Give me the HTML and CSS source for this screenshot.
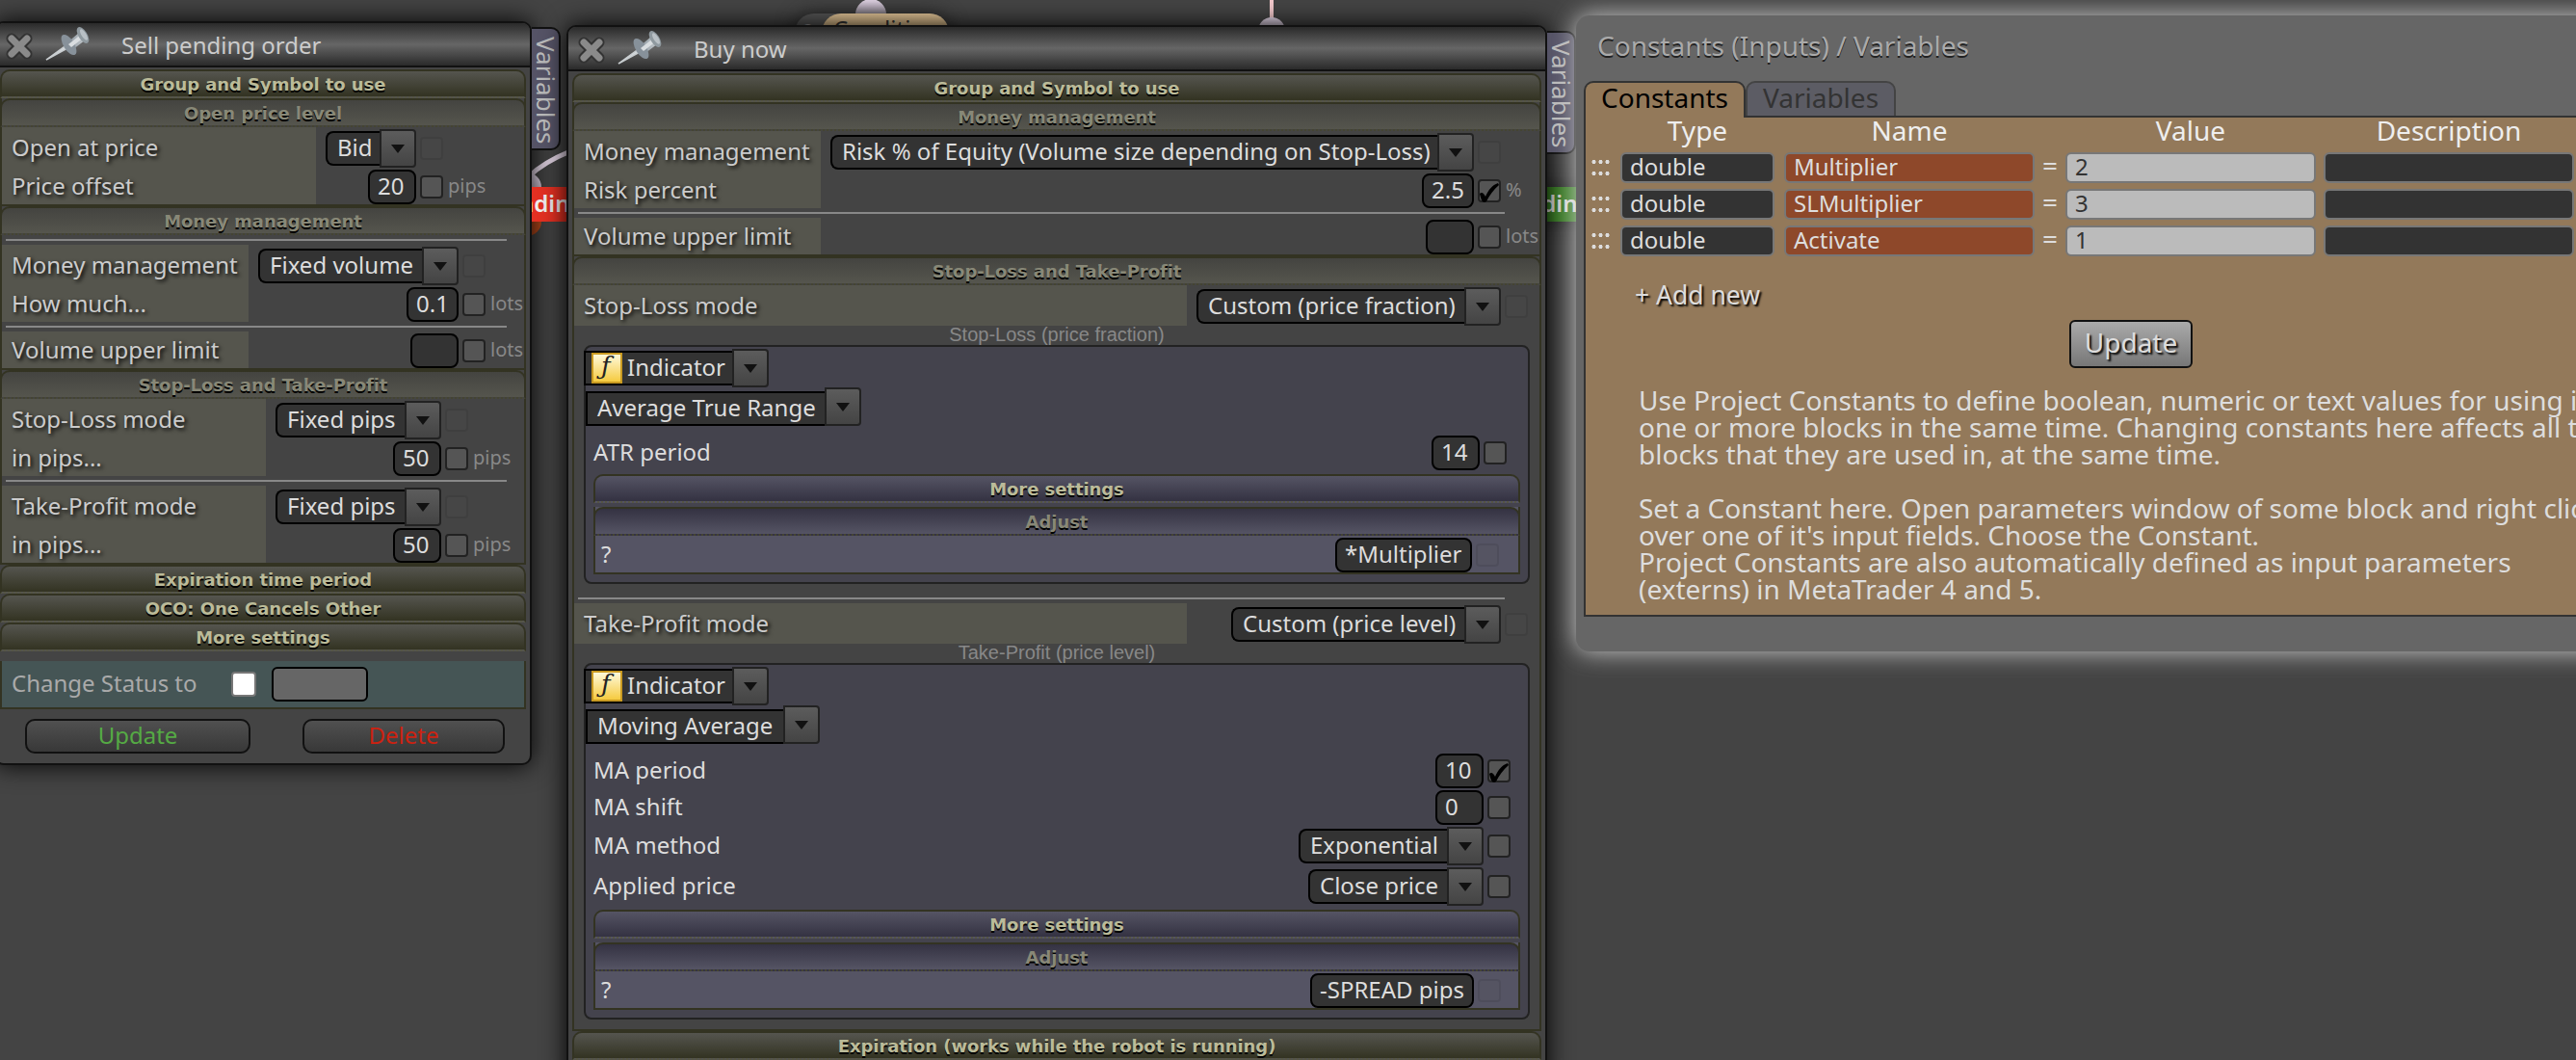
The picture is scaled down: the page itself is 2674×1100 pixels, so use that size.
FILE: index.html
```
<!DOCTYPE html>
<html>
	<head>
		<meta charset="utf-8">
		<title>Project</title>
		<link rel="stylesheet" href="styles.css">
	</head>
	<body>
	<svg width="0" height="0" class="defs">
		<defs>
			<linearGradient id="gp" x1="0" y1="0" x2="1" y2="0"><stop offset="0" stop-color="#89939b"/><stop offset="1" stop-color="#c3c9cd"/></linearGradient>
			<linearGradient id="gf" x1="0" y1="0" x2="0" y2="1"><stop offset="0" stop-color="#fffbe0"/><stop offset="1" stop-color="#f5c93a"/></linearGradient>
			<linearGradient id="gl" x1="0" y1="0" x2="0" y2="1"><stop offset="0" stop-color="#eee0f2"/><stop offset="1" stop-color="#a79cab"/></linearGradient>
			<symbol id="i-close" viewBox="0 0 30 30">
				<path d="M7 7L23 23M23 7L7 23" stroke="#333" stroke-width="11" stroke-linecap="round"/>
				<path d="M7 7L23 23M23 7L7 23" stroke="#8a8a8a" stroke-width="7" stroke-linecap="round"/>
			</symbol>
			<symbol id="i-pin" viewBox="0 0 48 36">
				<path d="M2 34L24 18L26 21Z" fill="#d5d9dc" stroke="#c8cdd0" stroke-width="1.5"/>
				<path d="M23 17L36 6L42 14L30 23Z" fill="url(#gp)"/>
				<ellipse cx="25.500" cy="18.500" rx="5.500" ry="12" transform="rotate(-32 25.500 18.500)" fill="#87919a"/>
				<path d="M25 18L39 7L41 11L28 21Z" fill="#d9dde0"/>
				<ellipse cx="40" cy="8.500" rx="4.500" ry="9.500" transform="rotate(-32 40 8.500)" fill="#8f999f"/>
				<ellipse cx="41" cy="8" rx="2.500" ry="6.500" transform="rotate(-32 41 8)" fill="#b9c0c5"/>
			</symbol>
			<symbol id="i-check" viewBox="0 0 24 26">
				<path d="M2 15C4 13 6 14 8 18C11 11 15 6 21 4L22 6C16 11 12 17 9 23C6 25 4 24 2 15Z" fill="#000"/>
			</symbol>
		</defs>
	</svg>

	<!-- diagram behind the windows -->
	<svg class="canvas" width="2674" height="1100">
		<path d="M549 183Q565 168 592 157" fill="none" stroke="#e6d8e8" stroke-width="5"/>
		<circle cx="547" cy="194" r="15" fill="url(#gl)"/>
		<circle cx="547" cy="230" r="15" fill="#b5481c"/>
		<circle cx="904" cy="15" r="16" fill="url(#gl)"/>
		<path d="M1320 0V20" stroke="#f3c9cc" stroke-width="4"/>
		<circle cx="1320" cy="32" r="14" fill="url(#gl)"/>
	</svg>
	<div class="node node-cond"><span class="num">2</span><span class="pill">Condition</span></div>
	<div class="node node-green">nding</div>

	<div class="win win-sell">
		<div class="titlebar"><svg class="x"><use href="#i-close"/></svg><svg class="pin"><use href="#i-pin"/></svg><span>Sell pending order</span></div>
		<div class="sidetab">Variables</div>
		<div class="node-red">nding</div>
		<div class="group closed"><h3>Group and Symbol to use</h3></div>
		<div class="group g-open">
			<h3>Open price level</h3>
			<div class="row tall"><label>Open at price</label><div class="field"><span class="sel w56">Bid</span><i class="dd"></i><b class="cb off"></b><em></em></div></div>
			<div class="row"><label>Price offset</label><div class="field"><span class="inp w50">20</span><b class="cb"></b><em>pips</em></div></div>
		</div>
		<div class="group g-money">
			<h3>Money management</h3>
			<hr>
			<div class="row tall"><label>Money management</label><div class="field"><span class="sel w170">Fixed volume</span><i class="dd"></i><b class="cb off"></b><em></em></div></div>
			<div class="row"><label>How much...</label><div class="field"><span class="inp w54">0.1</span><b class="cb"></b><em>lots</em></div></div>
			<hr>
			<div class="row"><label>Volume upper limit</label><div class="field"><span class="inp w50"></span><b class="cb"></b><em>lots</em></div></div>
		</div>
		<div class="group g-stops">
			<h3>Stop-Loss and Take-Profit</h3>
			<div class="row tall"><label>Stop-Loss mode</label><div class="field"><span class="sel w134">Fixed pips</span><i class="dd"></i><b class="cb off"></b><em></em></div></div>
			<div class="row"><label>in pips...</label><div class="field"><span class="inp w50">50</span><b class="cb"></b><em>pips</em></div></div>
			<hr>
			<div class="row tall"><label>Take-Profit mode</label><div class="field"><span class="sel w134">Fixed pips</span><i class="dd"></i><b class="cb off"></b><em></em></div></div>
			<div class="row"><label>in pips...</label><div class="field"><span class="inp w50">50</span><b class="cb"></b><em>pips</em></div></div>
		</div>
		<div class="group closed"><h3>Expiration time period</h3></div>
		<div class="group closed"><h3>OCO: One Cancels Other</h3></div>
		<div class="group closed"><h3>More settings</h3></div>
		<div class="status"><span>Change Status to</span><b></b><i></i></div>
		<div class="buttons"><div class="btn update">Update</div><div class="btn delete">Delete</div></div>
	</div>

	<div class="win win-buy">
		<div class="titlebar"><svg class="x"><use href="#i-close"/></svg><svg class="pin"><use href="#i-pin"/></svg><span>Buy now</span></div>
		<div class="sidetab">Variables</div>
		<div class="group closed"><h3>Group and Symbol to use</h3></div>
		<div class="group g-money">
			<h3>Money management</h3>
			<div class="row tall"><label>Money management</label><div class="field"><span class="sel w630">Risk % of Equity (Volume size depending on Stop-Loss)</span><i class="dd"></i><b class="cb off"></b><em></em></div></div>
			<div class="row"><label>Risk percent</label><div class="field"><span class="inp w54">2.5</span><b class="cb"><svg><use href="#i-check"/></svg></b><em>%</em></div></div>
			<hr>
			<div class="row"><label>Volume upper limit</label><div class="field"><span class="inp w50"></span><b class="cb"></b><em>lots</em></div></div>
		</div>
		<div class="group g-levels">
			<h3>Stop-Loss and Take-Profit</h3>
			<div class="row tall"><label>Stop-Loss mode</label><div class="field"><span class="sel w278">Custom (price fraction)</span><i class="dd"></i><b class="cb off"></b><em></em></div></div>
			<div class="subtitle">Stop-Loss (price fraction)</div>
			<div class="box box-atr">
				<div class="kind"><span class="sel"><svg class="f" viewBox="0 0 32 32"><rect x="1" y="1" width="30" height="30" fill="url(#gf)" stroke="#c99a22" stroke-width="2"/><text x="10" y="23" class="ftext">ƒ</text></svg>Indicator</span><i class="dd"></i></div>
				<div class="kind name"><span class="sel w249">Average True Range</span><i class="dd"></i></div>
				<div class="params">
					<div class="row"><label>ATR period</label><div class="field"><span class="inp w50">14</span><b class="cb"></b><em></em></div></div>
				</div>
				<div class="group blue closed"><h3>More settings</h3></div>
				<div class="group blue adjust">
					<h3>Adjust</h3>
					<div class="row"><label>?</label><div class="field"><span class="inp w142">*Multiplier</span><b class="cb off"></b><em></em></div></div>
				</div>
			</div>
			<hr class="sep">
			<div class="row tall"><label>Take-Profit mode</label><div class="field"><span class="sel w242">Custom (price level)</span><i class="dd"></i><b class="cb off"></b><em></em></div></div>
			<div class="subtitle">Take-Profit (price level)</div>
			<div class="box box-ma">
				<div class="kind"><span class="sel"><svg class="f" viewBox="0 0 32 32"><rect x="1" y="1" width="30" height="30" fill="url(#gf)" stroke="#c99a22" stroke-width="2"/><text x="10" y="23" class="ftext">ƒ</text></svg>Indicator</span><i class="dd"></i></div>
				<div class="kind name"><span class="sel w205">Moving Average</span><i class="dd"></i></div>
				<div class="params">
					<div class="row"><label>MA period</label><div class="field"><span class="inp w50">10</span><b class="cb"><svg><use href="#i-check"/></svg></b><em></em></div></div>
					<div class="row"><label>MA shift</label><div class="field"><span class="inp w50">0</span><b class="cb"></b><em></em></div></div>
					<div class="row tall"><label>MA method</label><div class="field"><span class="sel w154">Exponential</span><i class="dd"></i><b class="cb"></b><em></em></div></div>
					<div class="row tall"><label>Applied price</label><div class="field"><span class="sel w144">Close price</span><i class="dd"></i><b class="cb"></b><em></em></div></div>
				</div>
				<div class="group blue closed"><h3>More settings</h3></div>
				<div class="group blue adjust">
					<h3>Adjust</h3>
					<div class="row"><label>?</label><div class="field"><span class="inp w170">-SPREAD pips</span><b class="cb off"></b><em></em></div></div>
				</div>
			</div>
		</div>
		<div class="group closed"><h3>Expiration (works while the robot is running)</h3></div>
	</div>

	<div class="win-const">
		<h2>Constants (Inputs) / Variables</h2>
		<div class="tabs"><div class="tab active">Constants</div><div class="tab">Variables</div></div>
		<div class="panel">
			<div class="line head"><span></span><span>Type</span><span></span><span>Name</span><span></span><span>Value</span><span></span><span>Description</span></div>
			<div class="line"><i class="grip"></i><span class="c">double</span><u></u><span class="c red">Multiplier</span><u>=</u><span class="c val">2</span><u></u><span class="c"></span></div>
			<div class="line"><i class="grip"></i><span class="c">double</span><u></u><span class="c red">SLMultiplier</span><u>=</u><span class="c val">3</span><u></u><span class="c"></span></div>
			<div class="line"><i class="grip"></i><span class="c">double</span><u></u><span class="c red">Activate</span><u>=</u><span class="c val">1</span><u></u><span class="c"></span></div>
			<div class="add">+ Add new</div>
			<div class="save">Update</div>
			<p>Use Project Constants to define boolean, numeric or text values for using in<br>one or more blocks in the same time. Changing constants here affects all the<br>blocks that they are used in, at the same time.<br><br>Set a Constant here. Open parameters window of some block and right click<br>over one of it's input fields. Choose the Constant.<br>Project Constants are also automatically defined as input parameters<br>(externs) in MetaTrader 4 and 5.</p>
		</div>
	</div>
	</body>
</html>
```
FILE: styles.css
```
*{box-sizing:border-box;}
body{margin:0; width:2674px; height:1100px; overflow:hidden; position:relative; background:#444; font-family:"Noto Sans",sans-serif; font-size:24px; line-height:32px; color:#ddd;}
.defs{position:absolute;}
.canvas{position:absolute; left:0; top:0;}

/* diagram nodes */
.node{position:absolute; color:#eee; box-shadow:0 0 20px #222;}
.node-cond{left:825px; top:14px; width:160px; height:40px; border-radius:20px; background:#555; display:flex;}
.node-cond .num{width:28px; text-align:center; color:#999; font-size:20px; padding-top:2px;}
.node-cond .pill{flex:1; border-radius:20px; background:linear-gradient(#e3c698,#c09c66); color:#333; padding:0 0 0 12px;}
.node-red{position:absolute; left:100%; top:170px; width:38px; margin-left:2px; height:36px; line-height:34px; background:#e33022; color:#eee; font-weight:600; text-indent:-13px; overflow:hidden;}
.node-green{left:1570px; top:194px; width:90px; height:36px; line-height:34px; background:#3c8426; padding-left:15px; font-weight:600;}

/* windows */
.win{position:absolute; background:#444; border:2px solid #111; border-radius:10px; padding:0 4px; box-shadow:0 0 26px #000;}
.win-sell{left:-6px; top:22px; width:558px; height:772px;}
.win-buy{left:588px; top:26px; width:1018px; height:1100px;}
.titlebar{height:46px; margin:0 -4px 2px; border-bottom:2px solid #111; border-radius:8px 8px 0 0; background:linear-gradient(#2a2a2a,#666 50%,#2a2a2a); display:flex; align-items:center; color:#ccc;}
.titlebar span{padding-top:2px;}
.titlebar .x{width:30px; height:30px; margin:4px 0 0 9px;}
.titlebar .pin{width:48px; height:36px; margin:0 32px 0 11px;}
.sidetab{position:absolute; left:100%; top:4px; margin-left:2px; width:30px; height:128px; border:2px solid #111; border-left:0; border-radius:0 10px 10px 0; background:#555366; color:#bbb; writing-mode:vertical-rl; line-height:26px; font-size:26px; padding-top:8px;}

/* groups */
.group{border:2px solid #332; border-top:0;}
.group h3{margin:0 -2px; height:30px; border:2px solid #332; border-bottom:2px dotted #443; border-radius:10px 10px 0 0; background:linear-gradient(#444440,#55554d); font:bold 18px/27px "DejaVu Sans",sans-serif; letter-spacing:-.06px; color:#887; text-align:center; text-shadow:0 2px 0 #000;}
.group.closed{border:0;}
.group.closed h3{margin:0; border-bottom:2px dotted #554; background:linear-gradient(#55554f,#332); color:#bb9;}
.row{display:flex; height:38px;}
.row.tall{height:42px;}
.row label{width:256px; background:#55554d; padding:2px 0 0 10px; color:#ccc; text-shadow:2px 2px 4px #000; line-height:34px;}
.row.tall label{line-height:37px;}
.g-open label{width:326px;}
.g-stops label{width:274px;}
.g-levels>.row>label{width:636px;}
.field{flex:1; display:flex; align-items:center; justify-content:flex-end; padding-top:2px;}
.field em{font-style:normal; font-size:20px; line-height:28px; color:#888; width:40px; padding:0 0 2px 5px; white-space:nowrap;}
.g-open em{width:84px;}
.g-stops em{width:58px;}
.g-levels>.row em{width:12px;}
.inp,.sel{display:block; height:36px; line-height:29px; background:#333; border:2px solid #000; border-radius:8px; padding-left:8px; white-space:nowrap;}
.sel{border-right:0; border-radius:8px 0 0 8px; padding-left:10px;}
.dd{width:38px; height:40px; border:2px solid #222; border-radius:0 4px 4px 0; background:linear-gradient(#5c5c5c,#444); display:flex; align-items:center; justify-content:center;}
.dd:after{content:""; border:7px solid transparent; border-top:9px solid #111; border-bottom:0;}
.cb{width:24px; height:24px; margin-left:4px; border:2px solid #222; border-radius:4px; background:#555;}
.cb.off{opacity:.12;}
.cb svg{display:block; width:24px; height:26px; margin:-2px 0 0 -2px;}
.w50{width:50px;} .w54{width:54px;} .w56{width:56px;} .w134{width:134px;} .w142{width:142px;} .w144{width:144px;} .w154{width:154px;}
.w170{width:170px;} .w205{width:205px;} .w242{width:242px;} .w249{width:249px;} .w278{width:278px;} .w630{width:630px;}
hr{height:2px; border:0; margin:4px 18px 4px 4px; background:#888;}
.win-buy hr{margin-right:36px;}

/* status line and buttons */
.status{margin-top:10px; height:50px; border:2px solid #332; border-top:0; background:#455555; color:#aaa; display:flex; align-items:center; padding-left:10px;}
.status span{width:228px; margin-bottom:2px;}
.status b{width:26px; height:26px; background:#fff; border:2px solid #777; border-radius:4px;}
.status i{width:100px; height:36px; margin-left:16px; background:#666; border:2px solid #000; border-radius:6px;}
.buttons{display:flex; justify-content:space-between; padding:10px 22px 0 26px;}
.btn{height:36px; line-height:30px; border:2px solid #111; border-radius:10px; background:linear-gradient(#505050,#383838); text-align:center;}
.update{width:234px; color:#5a4;}
.delete{width:210px; color:#c21;}

/* indicator boxes */
.subtitle{height:20px; font:20px/19px "Liberation Sans",Arial,sans-serif; color:#888; text-align:center;}
.box{margin:0 10px; border:2px solid #222; border-radius:8px; background:#44434d; padding:2px 8px 8px;}
.kind{display:flex; align-items:center; height:40px; margin-left:-10px;}
.kind .sel{width:154px; border-radius:0; display:flex; padding-left:6px;}
.kind .f{width:32px; height:32px; margin-right:5px;}
.ftext{font:italic 26px "DejaVu Serif",serif; fill:#222;}
.kind.name{margin-left:-8px; align-items:flex-end;}
.kind.name .sel{padding-left:10px;}
.kind .w249{width:248px;}
.kind .w205{width:205px;}
.params{padding:8px 0 4px;}
.box .row label{background:none; width:300px; color:#ddd; text-shadow:none; padding-left:0;}
.box-atr .params em{width:14px;}
.box-ma .params em{width:10px;}
.box em{padding-left:0;}
.blue+.blue{margin-top:4px;}
.blue h3{background:linear-gradient(#343242,#555464);}
.blue.closed h3{background:linear-gradient(#555464,#343242);}
.adjust{background:#555464; height:70px;}
.box .adjust label{padding-left:6px;}
.box-atr .adjust em{width:20px;}
.box-ma .adjust em{width:18px;}
.box+.sep{margin-top:14px;}
.box-ma{margin-bottom:10px;}

/* constants window */
.win-const{position:absolute; left:1636px; top:16px; width:1152px; height:660px; border-radius:14px; background:#666; box-shadow:0 0 26px #ccc; padding:12px 8px 0;}
.win-const h2{margin:0 0 16px 14px; font-weight:normal; font-size:28px; line-height:39px; height:40px; color:#aaa; text-shadow:0 2px 0 #222;}
.tabs{display:flex; height:38px; position:relative;}
.tab{height:36px; width:156px; border:2px solid #444; border-bottom:0; border-radius:10px 10px 0 0; background:#5c5c64; color:#333; font-size:28px; line-height:31px; text-align:center;}
.tab.active{width:168px; height:38px; border-color:#333; background:#93795a; color:#000;}
.panel{margin-top:-2px; height:520px; border:2px solid #333; background:#93795a; color:#ddd;}
.line{display:grid; grid-template-columns:36px 160px 10px 260px 32px 260px 8px 260px; height:32px; margin-bottom:6px;}
.line.head{height:36px; margin-bottom:0; font-size:28px; line-height:26px; color:#eee; text-align:center;}
.line u{text-decoration:none; text-align:center; font-size:28px; line-height:26px;}
.c{border:2px solid #777; border-radius:6px; background:#333; padding-left:8px; line-height:26px;}
.c.red{background:#8e482a;}
.c.val{background:#bbb; color:#333;}
.grip{width:21px; height:24px; margin:4px 0 0 5px; background:radial-gradient(circle,#ddd 1.800px,transparent 2.300px) 0 0/7px 12px;}
.add{margin:24px 0 0 51px; font-size:26.500px; text-shadow:2px 2px 2px #000; height:32px;}
.save{width:128px; height:50px; margin:10px auto 0; border:2px solid #111; border-radius:6px; background:linear-gradient(#aaa,#777); font-size:28px; line-height:43px; text-align:center; text-shadow:2px 2px 2px #000;}
.panel p{margin:19px 0 0 55px; font-size:28px; line-height:28px; white-space:nowrap;}
```
